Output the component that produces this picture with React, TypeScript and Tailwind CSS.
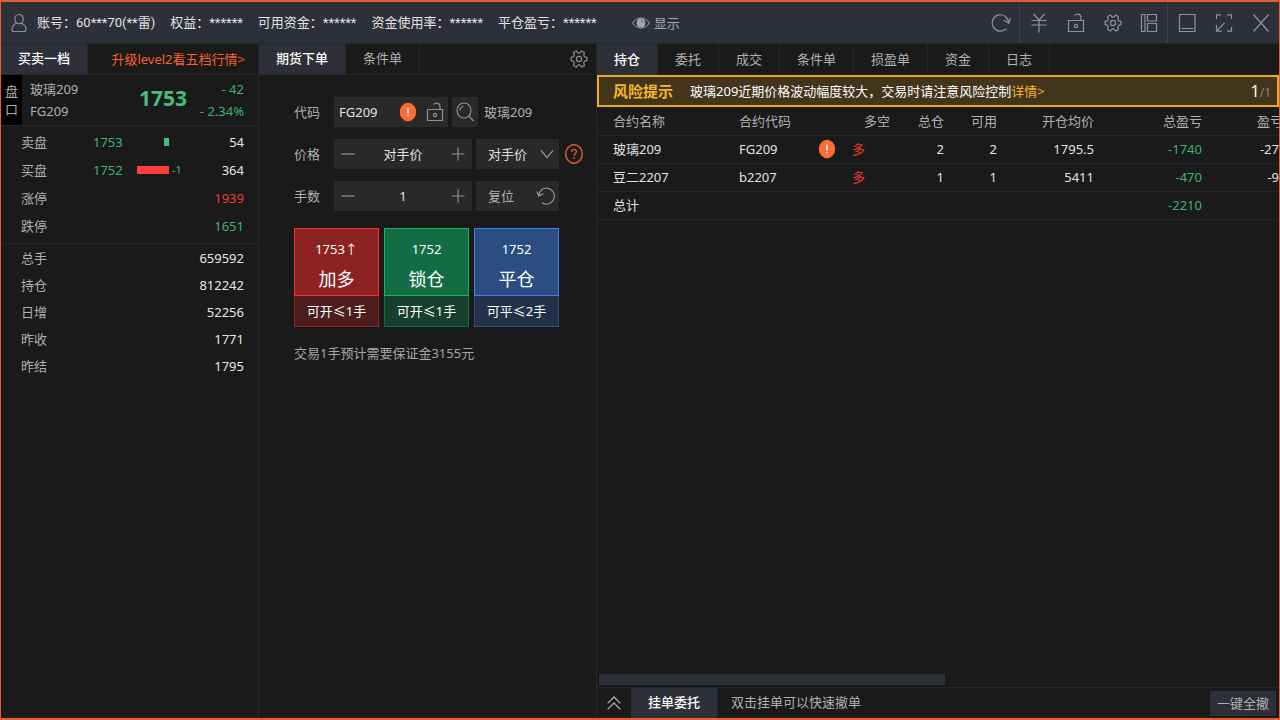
import { useState } from 'react'
import type { JSX, ReactNode } from 'react'

type IconProps = {
  children: ReactNode
  className?: string
}

type QuoteRow = {
  label: string
  value: string
  tone?: string
}

type Position = {
  name: string
  code: string
  warn: boolean
  total: string
  available: string
  price: string
  profit: string
  ratio: string
}

type OrderAction = {
  price: string
  name: string
  limit: string
  top: string
  bottom: string
}

const accountStats = [
  { label: '账号：', value: '60***70(**雷)' },
  { label: '权益：', value: '******' },
  { label: '可用资金：', value: '******' },
  { label: '资金使用率：', value: '******' },
  { label: '平仓盈亏：', value: '******' },
]

const limitRows: QuoteRow[] = [
  { label: '涨停', value: '1939', tone: 'text-[#f03a36]' },
  { label: '跌停', value: '1651', tone: 'text-[#3db370]' },
]

const summaryRows: QuoteRow[] = [
  { label: '总手', value: '659592' },
  { label: '持仓', value: '812242' },
  { label: '日增', value: '52256' },
  { label: '昨收', value: '1771' },
  { label: '昨结', value: '1795' },
]

const positionTabs = ['持仓', '委托', '成交', '条件单', '损盈单', '资金', '日志']

const positions: Position[] = [
  { name: '玻璃209', code: 'FG209', warn: true, total: '2', available: '2', price: '1795.5', profit: '-1740', ratio: '-27' },
  { name: '豆二2207', code: 'b2207', warn: false, total: '1', available: '1', price: '5411', profit: '-470', ratio: '-9' },
]

const orderActions: OrderAction[] = [
  {
    price: '1753↑',
    name: '加多',
    limit: '可开≤1手',
    top: 'border-[#f5342f] bg-[#8b2323]',
    bottom: 'border-[#8b2323] bg-[#4d1d1e]',
  },
  {
    price: '1752',
    name: '锁仓',
    limit: '可开≤1手',
    top: 'border-[#12b866] bg-[#126c44]',
    bottom: 'border-[#126c44] bg-[#16402d]',
  },
  {
    price: '1752',
    name: '平仓',
    limit: '可平≤2手',
    top: 'border-[#3c80e8] bg-[#2c4d80]',
    bottom: 'border-[#2c4d80] bg-[#223149]',
  },
]

function Icon({ children, className = 'size-5' }: IconProps): JSX.Element {
  return (
    <svg viewBox="0 0 20 20" className={`shrink-0 ${className}`} fill="none" stroke="currentColor" strokeWidth="1.2" aria-hidden="true">
      {children}
    </svg>
  )
}

function GearIcon(): JSX.Element {
  return (
    <Icon>
      <path
        strokeLinejoin="round"
        d="M15.6 7.8 17.9 8.4V11.6L15.6 12.2 14.7 13.7 15.4 16.5 12.8 18.1 10.8 15.9H9.2L7.2 18.1 4.600 16.5 5.3 13.7 4.4 12.2 2.100 11.6V8.4L4.4 7.8 5.3 6.3 4.600 3.5 7.2 1.9 9.2 4.1H10.8L12.8 1.9 15.400 3.5 14.7 6.3Z"
      />
      <circle cx="10" cy="10" r="2.6" />
    </Icon>
  )
}

function UnlockIcon(): JSX.Element {
  return (
    <Icon>
      <path d="M2.5 7.500h15v11h-15zM15 7.500V4.800c0-2-1.500-3.600-3.600-3.600-1.300 0-2.300.5-2.900 1.400" />
      <circle cx="10" cy="13" r="1.6" />
    </Icon>
  )
}

function WarnBadge(): JSX.Element {
  return (
    <svg viewBox="0 0 18 20" className="h-5 w-[18px] shrink-0" role="img" aria-label="风险">
      <ellipse cx="9" cy="10" rx="8.2" ry="9.3" fill="#ff6a35" />
      <path d="M9 5.4v6M9 12.9v1.7" stroke="#fff" strokeWidth="1.4" />
    </svg>
  )
}

const toolButtons: { label: string; divider?: boolean; icon: JSX.Element }[] = [
  {
    label: '刷新',
    divider: true,
    icon: (
      <Icon>
        <path d="M15.4 15.6A8.2 8.2 0 1 1 17.6 9.5M12.8 7l4.9 3.4L19.4 5" />
      </Icon>
    ),
  },
  {
    label: '银期转账',
    icon: (
      <Icon>
        <path d="M4.5 1 10 7l5.5-6M10 7v12.5M2.5 7.5h15M2.5 12h15" />
      </Icon>
    ),
  },
  { label: '解锁', icon: <UnlockIcon /> },
  { label: '设置', icon: <GearIcon /> },
  {
    label: '布局',
    divider: true,
    icon: (
      <Icon>
        <path d="M2.500 1.500h3.500v17H2.500zM8.500 1.500h9v6.500h-9zM8.500 10.500h9v8h-9z" />
      </Icon>
    ),
  },
  {
    label: '最小化',
    icon: (
      <Icon>
        <path d="M2.500 1.500h15.500v17H2.500zM4.500 15.500h11.500" />
      </Icon>
    ),
  },
  {
    label: '全屏',
    icon: (
      <Icon>
        <path d="M2.500 6V1.800h4.500M13 1.800h4.500V6M17.500 14v4.200H13M10.500 10 2.800 17.900M2.500 12v6.200h5.500" />
      </Icon>
    ),
  },
  {
    label: '关闭',
    icon: (
      <Icon>
        <path d="m2.5 1.5 15 17M17.5 1.5l-15 17" />
      </Icon>
    ),
  },
]

function TopBar(): JSX.Element {
  return (
    <header className="flex h-[42px] items-center justify-between border-b border-[#23262b] bg-[#2d3039]">
      <div className="flex items-center gap-[15px] pl-2 text-[#e2e2e2]">
        <div className="flex items-center gap-2">
          <Icon className="size-5 text-[#8b8f98]">
            <path d="M10 1.5c2.6 0 4.2 2 4.2 4.5S12.6 10.7 10 10.7 5.8 8.500 5.800 6 7.400 1.500 10 1.500ZM7.400 10.200C4.800 11.500 3 13.800 3 16.500c0 1.300.6 2 1.800 2h10.400c1.200 0 1.800-.7 1.800-2 0-2.700-1.800-5-4.400-6.300" />
          </Icon>
          <p>
            {accountStats[0].label}
            <span className="font-['Roboto','Noto_Sans_CJK_SC',sans-serif]">{accountStats[0].value}</span>
          </p>
        </div>
        {accountStats.slice(1).map((stat) => (
          <p key={stat.label}>
            {stat.label}
            <span className="font-['Roboto',sans-serif]">{stat.value}</span>
          </p>
        ))}
        <button type="button" className="ml-5 flex items-center gap-1 text-[#a6a9b0]">
          <svg viewBox="0 0 18 12" className="h-3 w-[18px]" fill="none" stroke="currentColor" aria-hidden="true">
            <path d="M.6 6C3 2.500 6 1 9 1s6 1.500 8.400 5C15 9.500 12 11 9 11S3 9.500.6 6Z" />
            <circle cx="9" cy="6" r="4" fill="currentColor" />
            <path d="M9 3.500A2.500 2.500 0 0 1 11.500 6" stroke="#6b6e76" />
          </svg>
          显示
        </button>
      </div>
      <div className="flex h-full text-[#8f929a]">
        {toolButtons.map((tool) => (
          <button
            key={tool.label}
            type="button"
            aria-label={tool.label}
            className={`flex w-[37px] items-center justify-center ${tool.divider ? 'border-r border-[#3c4152]' : ''}`}
          >
            {tool.icon}
          </button>
        ))}
      </div>
    </header>
  )
}

type TabProps = {
  label: string
  active: boolean
  onClick?: () => void
}

function Tab({ label, active, onClick }: TabProps): JSX.Element {
  return (
    <button
      type="button"
      onClick={onClick}
      className={`shrink-0 border-r border-[#262626] px-[17px] pb-[2px] ${active ? 'bg-[#2d3039] font-medium text-white' : 'text-[#b0b0b0]'}`}
    >
      {label}
    </button>
  )
}

function QuotePanel(): JSX.Element {
  return (
    <section className="flex w-[258px] shrink-0 flex-col border-r border-[#262626]">
      <div className="flex h-[31px] items-stretch border-b border-[#262626]">
        <Tab label="买卖一档" active />
        <a href="#level2" className="ml-auto self-center pr-[13px] text-[#f8602f]">
          升级level2看五档行情&gt;
        </a>
      </div>
      <div className="flex h-[51px] border-b border-[#262626]">
        <button type="button" className="flex w-[21px] shrink-0 flex-col items-center justify-center bg-black leading-[18px] text-[#b0b0b0]">
          <span>盘</span>
          <span>口</span>
        </button>
        <div className="flex flex-1 items-center justify-between pr-[14px] pl-2 leading-[22px]">
          <div className="w-[109px] text-[#b0b0b0]">
            <p>玻璃209</p>
            <p>FG209</p>
          </div>
          <p className="flex-1 pb-1 text-[21px] font-bold text-[#45bd7d]">1753</p>
          <div className="text-right text-[#3db370]">
            <p>- 42</p>
            <p>- 2.34%</p>
          </div>
        </div>
      </div>
      <dl className="border-b border-[#262626] pt-[2px] pb-[3px] pr-[14px] pl-5 text-[#e6e6e6]">
        <div className="flex h-7 items-center">
          <dt className="w-[72px] text-[#b0b0b0]">卖盘</dt>
          <dd className="w-11 text-[#3db370]">1753</dd>
          <dd className="flex w-8 justify-end">
            <span className="h-2 w-[5px] bg-[#45bd7d]" />
          </dd>
          <dd className="flex-1 text-right">54</dd>
        </div>
        <div className="flex h-7 items-center">
          <dt className="w-[72px] text-[#b0b0b0]">买盘</dt>
          <dd className="w-11 text-[#3db370]">1752</dd>
          <dd className="flex items-center gap-[3px]">
            <span className="h-2 w-8 bg-[#ff3d3b]" />
            <span className="text-[11px] text-[#3db370]">-1</span>
          </dd>
          <dd className="flex-1 text-right">364</dd>
        </div>
        {limitRows.map((row) => (
          <div key={row.label} className="flex h-7 items-center justify-between">
            <dt className="text-[#b0b0b0]">{row.label}</dt>
            <dd className={row.tone}>{row.value}</dd>
          </div>
        ))}
      </dl>
      <dl className="pr-[14px] pl-5 text-[#e6e6e6]">
        {summaryRows.map((row) => (
          <div key={row.label} className="flex h-[27px] items-center justify-between">
            <dt className="text-[#b0b0b0]">{row.label}</dt>
            <dd>{row.value}</dd>
          </div>
        ))}
      </dl>
    </section>
  )
}

type StepperProps = {
  id: string
  value: string
  onChange: (value: string) => void
}

function Stepper({ id, value, onChange }: StepperProps): JSX.Element {
  const step = (delta: number) => {
    const current = Number(value)
    if (!Number.isNaN(current)) onChange(String(Math.max(1, current + delta)))
  }

  return (
    <div className="flex h-[30px] w-[138px] items-center bg-[#292929] text-[#8f8f8f]">
      <button type="button" aria-label="减少" onClick={() => step(-1)} className="flex w-7 shrink-0 justify-center">
        <Icon className="size-4">
          <path d="M2 10h16" strokeWidth="1.500" />
        </Icon>
      </button>
      <input
        id={id}
        value={value}
        onChange={(event) => onChange(event.target.value)}
        className="min-w-0 flex-1 bg-transparent text-center text-[#e2e2e2] outline-none"
      />
      <button type="button" aria-label="增加" onClick={() => step(1)} className="flex w-7 shrink-0 justify-center">
        <Icon className="size-4">
          <path d="M2 10h16M10 2v16" strokeWidth="1.500" />
        </Icon>
      </button>
    </div>
  )
}

function OrderPanel(): JSX.Element {
  const [tab, setTab] = useState('期货下单')
  const [code, setCode] = useState('FG209')
  const [price, setPrice] = useState('对手价')
  const [lots, setLots] = useState('1')

  return (
    <section className="flex w-[338px] shrink-0 flex-col border-r border-[#262626]">
      <div className="flex h-[31px] items-stretch border-b border-[#262626]">
        {['期货下单', '条件单'].map((label) => (
          <Tab key={label} label={label} active={tab === label} onClick={() => setTab(label)} />
        ))}
        <button type="button" aria-label="下单设置" className="ml-auto pr-[7px] text-[#8f8f8f]">
          <GearIcon />
        </button>
      </div>
      <form className="flex flex-col gap-3 pt-[22px] pr-2 pl-[35px]" onSubmit={(event) => event.preventDefault()}>
        <div className="flex items-center gap-1">
          <label htmlFor="code" className="w-9 shrink-0 text-[#b0b0b0]">
            代码
          </label>
          <div className="flex h-[30px] w-[114px] items-center gap-2 bg-[#292929] pr-[3px] pl-[5px] text-[#8f8f8f]">
            <input
              id="code"
              value={code}
              onChange={(event) => setCode(event.target.value)}
              className="w-full min-w-0 bg-transparent text-[#e2e2e2] outline-none"
            />
            <WarnBadge />
            <button type="button" aria-label="锁定合约">
              <UnlockIcon />
            </button>
          </div>
          <button type="button" aria-label="搜索" className="flex h-[30px] w-[26px] items-center justify-center bg-[#292929] text-[#8f8f8f]">
            <Icon>
              <ellipse cx="9" cy="8.500" rx="7" ry="7.500" />
              <path d="m14 14 4.500 5M5 8.500C5 6 6.500 4.500 8.500 4.300" />
            </Icon>
          </button>
          <p className="pl-[2px] text-[#b0b0b0]">玻璃209</p>
        </div>
        <div className="flex items-center gap-1">
          <label htmlFor="price" className="w-9 shrink-0 text-[#b0b0b0]">
            价格
          </label>
          <Stepper id="price" value={price} onChange={setPrice} />
          <div className="grid h-[30px] w-[83px] items-center bg-[#292929]">
            <select
              aria-label="价格类型"
              className="col-start-1 row-start-1 h-full w-full appearance-none bg-transparent pl-3 text-[#e2e2e2] outline-none"
            >
              <option>对手价</option>
            </select>
            <Icon className="pointer-events-none col-start-1 row-start-1 mr-1 size-4 justify-self-end text-[#9a9a9a]">
              <path d="m2.500 5.500 7.500 9 7.500-9" strokeWidth="1.600" />
            </Icon>
          </div>
          <button type="button" aria-label="帮助" className="pl-px text-[#d95a32]">
            <Icon>
              <ellipse cx="10" cy="10" rx="8.300" ry="9.300" strokeWidth="1.500" />
              <path d="M7.600 8c0-1.700 1-2.600 2.400-2.600S12.400 6.300 12.400 7.600c0 1.900-2.300 2-2.300 4.300M10.100 13.300v1.600" strokeWidth="1.400" />
            </Icon>
          </button>
        </div>
        <div className="flex items-center gap-1">
          <label htmlFor="lots" className="w-9 shrink-0 text-[#b0b0b0]">
            手数
          </label>
          <Stepper id="lots" value={lots} onChange={setLots} />
          <button
            type="button"
            onClick={() => setLots('1')}
            className="flex h-[30px] w-[83px] items-center justify-between bg-[#292929] pr-[3px] pl-3 text-[#b0b0b0]"
          >
            复位
            <Icon className="size-5 text-[#8f8f8f]">
              <path d="M2.800 9.500a7.800 8 0 1 1 3.400 7.200M.8 5.500l2 4.600 4.700-2.700" />
            </Icon>
          </button>
        </div>
        <div className="mt-[5px] flex gap-[5px]">
          {orderActions.map((action) => (
            <button key={action.name} type="button" className="w-[85px] text-white">
              <span className={`flex h-[68px] flex-col items-center justify-end gap-2 border pb-1 ${action.top}`}>
                <span className="leading-5">{action.price}</span>
                <span className="text-lg leading-6">{action.name}</span>
              </span>
              <span className={`flex h-[31px] items-center justify-center border border-t-0 ${action.bottom}`}>{action.limit}</span>
            </button>
          ))}
        </div>
        <p className="mt-1 text-[#a6a6a6]">交易1手预计需要保证金3155元</p>
      </form>
    </section>
  )
}

function PositionTable(): JSX.Element {
  return (
    <div className="overflow-hidden">
      <table className="w-[686px] table-fixed text-right text-[#e2e2e2]">
        <colgroup>
          <col className="w-[142px]" />
          <col className="w-[104px]" />
          <col className="w-[47px]" />
          <col className="w-[54px]" />
          <col className="w-[53px]" />
          <col className="w-[97px]" />
          <col className="w-[108px]" />
          <col className="w-[81px]" />
        </colgroup>
        <thead>
          <tr className="h-7 border-b border-[#262626] text-[#b0b0b0] [&>th]:font-normal">
            <th className="pl-4 text-left">合约名称</th>
            <th className="text-left">合约代码</th>
            <th>多空</th>
            <th>总仓</th>
            <th>可用</th>
            <th>开仓均价</th>
            <th>总盈亏</th>
            <th>盈亏</th>
          </tr>
        </thead>
        <tbody>
          {positions.map((row) => (
            <tr key={row.code} className="h-7 border-b border-[#262626]">
              <td className="pl-4 text-left">{row.name}</td>
              <td>
                <div className="flex items-center justify-between pr-[7px]">
                  {row.code}
                  {row.warn && <WarnBadge />}
                </div>
              </td>
              <td className="pl-[9px] text-left text-[#f03a36]">多</td>
              <td>{row.total}</td>
              <td>{row.available}</td>
              <td>{row.price}</td>
              <td className="text-[#3db370]">{row.profit}</td>
              <td className="pr-1">{row.ratio}</td>
            </tr>
          ))}
          <tr className="h-7 border-b border-[#262626]">
            <td className="pl-4 text-left">总计</td>
            <td colSpan={5} />
            <td className="text-[#3db370]">-2210</td>
            <td />
          </tr>
        </tbody>
      </table>
    </div>
  )
}

function PositionPanel(): JSX.Element {
  const [tab, setTab] = useState('持仓')

  return (
    <section className="flex min-w-0 flex-1 flex-col">
      <div className="flex h-[31px] shrink-0 items-stretch">
        {positionTabs.map((label) => (
          <Tab key={label} label={label} active={tab === label} onClick={() => setTab(label)} />
        ))}
      </div>
      <div className="flex h-8 shrink-0 items-center border-2 border-[#e9a825] bg-[#43351b] pr-[6px] pl-[14px] text-white">
        <strong className="mr-[17px] text-[15px] font-bold text-[#f5b52c]">风险提示</strong>
        <p>
          玻璃209近期价格波动幅度较大，交易时请注意风险控制
          <a href="#detail" className="text-[#f5b52c]">
            详情&gt;
          </a>
        </p>
        <p className="ml-auto text-base">
          1<span className="text-xs text-[#8f8877]">/1</span>
        </p>
      </div>
      <PositionTable />
      <div className="mt-auto px-[2px] pb-[2px]">
        <div className="h-[11px] w-[51%] bg-[#2d3039]" />
      </div>
      <footer className="flex h-[31px] items-stretch border-t border-[#262626]">
        <button type="button" aria-label="展开" className="flex w-[34px] items-center justify-center text-[#b0b0b0]">
          <Icon className="size-4">
            <path d="m2 10.500 8-8 8 8M2 18l8-8 8 8" strokeWidth="1.600" />
          </Icon>
        </button>
        <Tab label="挂单委托" active />
        <p className="self-center pb-[2px] pl-[13px] text-[#b0b0b0]">双击挂单可以快速撤单</p>
        <button type="button" className="mr-[3px] ml-auto h-[25px] self-center bg-[#2d3039] px-[7px] text-[#b0b0b0]">
          一键全撤
        </button>
      </footer>
    </section>
  )
}

export default function App(): JSX.Element {
  return (
    <div className="flex min-h-screen flex-col border-x border-y-2 border-x-[#e85c30] border-y-[#e85c30] bg-[#1a1a1a] font-['Noto_Sans','Noto_Sans_CJK_SC',sans-serif] text-[13px] leading-5">
      <TopBar />
      <main className="flex flex-1">
        <QuotePanel />
        <OrderPanel />
        <PositionPanel />
      </main>
    </div>
  )
}
